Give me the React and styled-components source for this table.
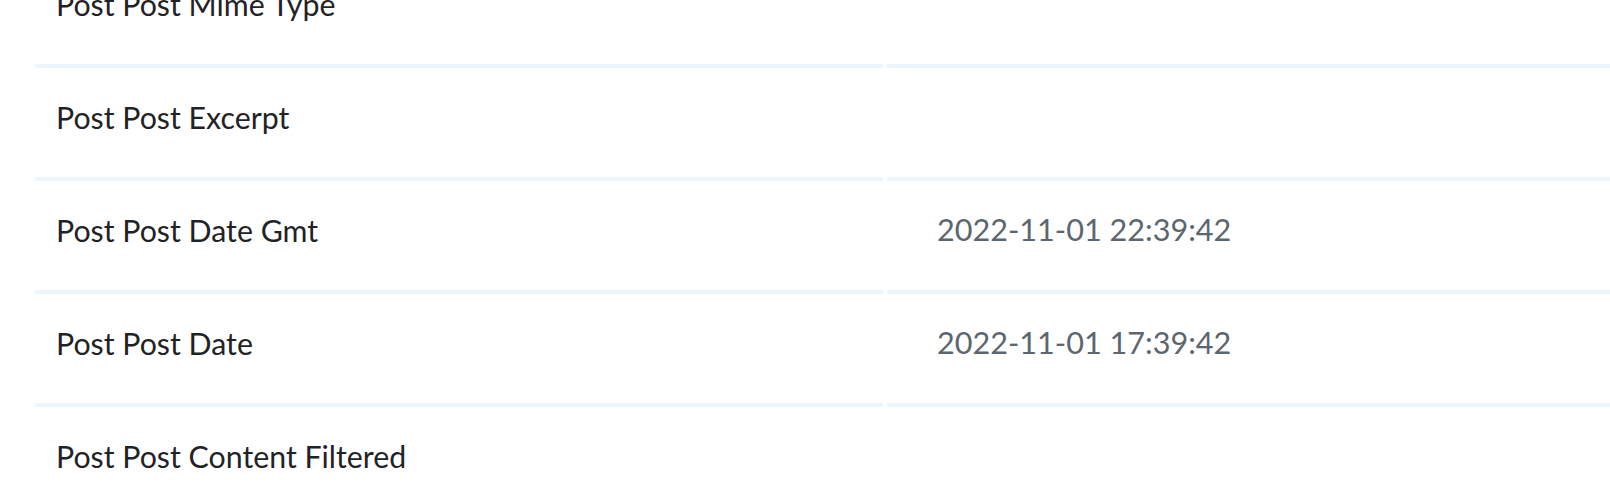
import React from "react";
import styled, { createGlobalStyle } from "styled-components";

const Global = createGlobalStyle`
  html, body {
    margin: 0;
    padding: 0;
    background: #ffffff;
    overflow: hidden;
  }
  body {
    font-family: Lato, "Noto Sans", sans-serif;
    -webkit-font-smoothing: antialiased;
  }
`;

const Table = styled.div`
  display: grid;
  grid-template-columns: 848px 1fr;
  column-gap: 4px;
  margin-top: -45px;
  margin-left: 35px;
`;

const Cell = styled.div`
  box-sizing: content-box;
  height: 97px;
  padding-bottom: 12px;
  padding-left: ${(p) => (p.$value ? "50px" : "21px")};
  border-bottom: 4px solid #ebf5fd;
  display: flex;
  align-items: center;
  font-size: ${(p) => (p.$value ? "30.6px" : "30.3px")};
  color: ${(p) => (p.$value ? "#5c666e" : "#1f2326")};
  white-space: nowrap;
`;

const rows = [
  ["Post Post Mime Type", ""],
  ["Post Post Excerpt", ""],
  ["Post Post Date Gmt", "2022-11-01 22:39:42"],
  ["Post Post Date", "2022-11-01 17:39:42"],
  ["Post Post Content Filtered", ""],
];

export default function App() {
  return (
    <>
      <Global />
      <Table>
        {rows.map(([label, value]) => (
          <React.Fragment key={label}>
            <Cell>{label}</Cell>
            <Cell $value>{value}</Cell>
          </React.Fragment>
        ))}
      </Table>
    </>
  );
}
